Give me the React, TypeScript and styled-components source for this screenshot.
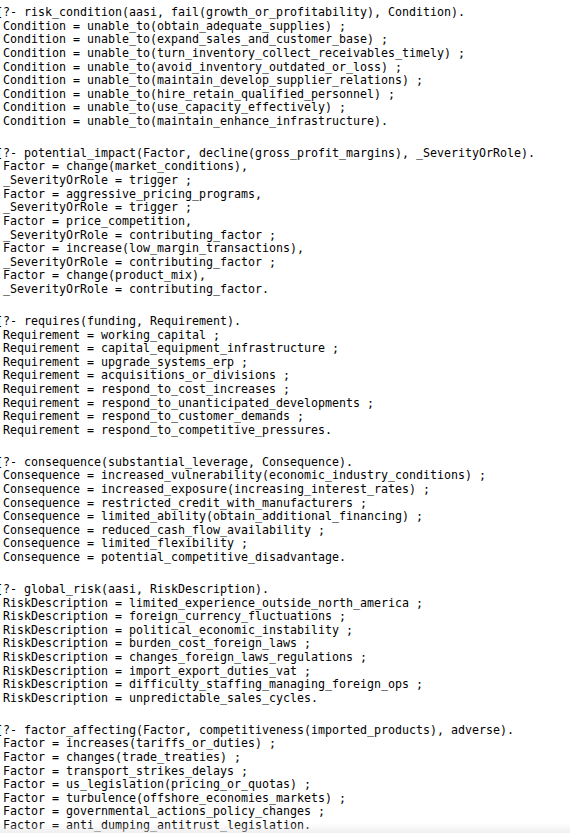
import React from "react";
import styled, { createGlobalStyle } from "styled-components";

const GlobalStyle = createGlobalStyle`
  html, body {
    margin: 0;
    padding: 0;
    background: #ffffff;
  }
  body {
    width: 570px;
    height: 833px;
    overflow: hidden;
  }
`;

const Page = styled.div`
  position: relative;
  width: 570px;
  height: 833px;
  overflow: hidden;
  background: #ffffff;
`;

const Output = styled.div`
  display: flex;
  flex-direction: column;
  gap: 18.2px;
  padding: 6px 0 0 3px;
  font-family: "DejaVu Sans Mono", "Liberation Mono", monospace;
  font-size: 11.63px;
  line-height: 13.62px;
  color: #000000;
`;

const Block = styled.div`
  display: flex;
  flex-direction: column;
`;

const Line = styled.div`
  white-space: pre;
`;

const Bracket = styled.span`
  display: inline-block;
  width: 7px;
  margin-left: -7px;
`;

const BottomFade = styled.div`
  position: absolute;
  left: 0;
  right: 0;
  bottom: 0;
  height: 10px;
  background: linear-gradient(to bottom, rgba(235, 235, 235, 0), rgba(225, 225, 225, 0.55));
  pointer-events: none;
`;

type Query = { head: string; answers: string[] };

const queries: Query[] = [
  {
    head: "?- risk_condition(aasi, fail(growth_or_profitability), Condition).",
    answers: [
      "Condition = unable_to(obtain_adequate_supplies) ;",
      "Condition = unable_to(expand_sales_and_customer_base) ;",
      "Condition = unable_to(turn_inventory_collect_receivables_timely) ;",
      "Condition = unable_to(avoid_inventory_outdated_or_loss) ;",
      "Condition = unable_to(maintain_develop_supplier_relations) ;",
      "Condition = unable_to(hire_retain_qualified_personnel) ;",
      "Condition = unable_to(use_capacity_effectively) ;",
      "Condition = unable_to(maintain_enhance_infrastructure).",
    ],
  },
  {
    head: "?- potential_impact(Factor, decline(gross_profit_margins), _SeverityOrRole).",
    answers: [
      "Factor = change(market_conditions),",
      "_SeverityOrRole = trigger ;",
      "Factor = aggressive_pricing_programs,",
      "_SeverityOrRole = trigger ;",
      "Factor = price_competition,",
      "_SeverityOrRole = contributing_factor ;",
      "Factor = increase(low_margin_transactions),",
      "_SeverityOrRole = contributing_factor ;",
      "Factor = change(product_mix),",
      "_SeverityOrRole = contributing_factor.",
    ],
  },
  {
    head: "?- requires(funding, Requirement).",
    answers: [
      "Requirement = working_capital ;",
      "Requirement = capital_equipment_infrastructure ;",
      "Requirement = upgrade_systems_erp ;",
      "Requirement = acquisitions_or_divisions ;",
      "Requirement = respond_to_cost_increases ;",
      "Requirement = respond_to_unanticipated_developments ;",
      "Requirement = respond_to_customer_demands ;",
      "Requirement = respond_to_competitive_pressures.",
    ],
  },
  {
    head: "?- consequence(substantial_leverage, Consequence).",
    answers: [
      "Consequence = increased_vulnerability(economic_industry_conditions) ;",
      "Consequence = increased_exposure(increasing_interest_rates) ;",
      "Consequence = restricted_credit_with_manufacturers ;",
      "Consequence = limited_ability(obtain_additional_financing) ;",
      "Consequence = reduced_cash_flow_availability ;",
      "Consequence = limited_flexibility ;",
      "Consequence = potential_competitive_disadvantage.",
    ],
  },
  {
    head: "?- global_risk(aasi, RiskDescription).",
    answers: [
      "RiskDescription = limited_experience_outside_north_america ;",
      "RiskDescription = foreign_currency_fluctuations ;",
      "RiskDescription = political_economic_instability ;",
      "RiskDescription = burden_cost_foreign_laws ;",
      "RiskDescription = changes_foreign_laws_regulations ;",
      "RiskDescription = import_export_duties_vat ;",
      "RiskDescription = difficulty_staffing_managing_foreign_ops ;",
      "RiskDescription = unpredictable_sales_cycles.",
    ],
  },
  {
    head: "?- factor_affecting(Factor, competitiveness(imported_products), adverse).",
    answers: [
      "Factor = increases(tariffs_or_duties) ;",
      "Factor = changes(trade_treaties) ;",
      "Factor = transport_strikes_delays ;",
      "Factor = us_legislation(pricing_or_quotas) ;",
      "Factor = turbulence(offshore_economies_markets) ;",
      "Factor = governmental_actions_policy_changes ;",
      "Factor = anti_dumping_antitrust_legislation.",
    ],
  },
];

export default function App() {
  return (
    <>
      <GlobalStyle />
      <Page>
        <Output>
          {queries.map((q, i) => (
            <Block key={i}>
              <Line>
                <Bracket>[</Bracket>
                {q.head}
              </Line>
              {q.answers.map((a, j) => (
                <Line key={j}>{a}</Line>
              ))}
            </Block>
          ))}
        </Output>
        <BottomFade />
      </Page>
    </>
  );
}
